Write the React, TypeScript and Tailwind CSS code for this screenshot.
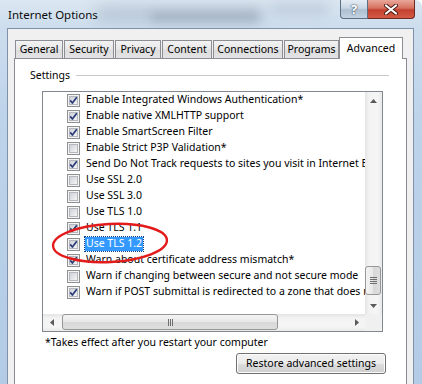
import React from "react";

type Item = { checked: boolean; label: string; selected?: boolean };

const items: Item[] = [
  { checked: true, label: "Enable Integrated Windows Authentication*" },
  { checked: true, label: "Enable native XMLHTTP support" },
  { checked: true, label: "Enable SmartScreen Filter" },
  { checked: false, label: "Enable Strict P3P Validation*" },
  { checked: true, label: "Send Do Not Track requests to sites you visit in Internet Explorer*" },
  { checked: false, label: "Use SSL 2.0" },
  { checked: false, label: "Use SSL 3.0" },
  { checked: false, label: "Use TLS 1.0" },
  { checked: true, label: "Use TLS 1.1" },
  { checked: true, label: "Use TLS 1.2", selected: true },
  { checked: true, label: "Warn about certificate address mismatch*" },
  { checked: false, label: "Warn if changing between secure and not secure mode" },
  { checked: true, label: "Warn if POST submittal is redirected to a zone that does not permit posts" },
];

const tabs = [
  { label: "General", w: "w-[48px]" },
  { label: "Security", w: "w-[50px]" },
  { label: "Privacy", w: "w-[46px]" },
  { label: "Content", w: "w-[50px]" },
  { label: "Connections", w: "w-[70px]" },
  { label: "Programs", w: "w-[55px]" },
];

function CheckBox({ checked }: { checked: boolean }) {
  return (
    <svg width="13" height="13" viewBox="0 0 13 13" className="shrink-0">
      <defs>
        <linearGradient id="cbg" x1="0" y1="0" x2="1" y2="1">
          <stop offset="0" stopColor="#cbcfd5" />
          <stop offset="1" stopColor="#f7f7f7" />
        </linearGradient>
      </defs>
      <rect x="0.5" y="0.5" width="12" height="12" fill="#f4f4f4" stroke="#8e8f8f" />
      <rect x="2.5" y="2.5" width="8" height="8" fill="url(#cbg)" stroke="#b4b8be" />
      {checked && (
        <path d="M3.2 6.4 L5.4 9 L9.8 3.2" fill="none" stroke="#2a3d78" strokeWidth="1.7" strokeLinejoin="round" />
      )}
    </svg>
  );
}

function Arrow({ dir }: { dir: "up" | "down" | "left" | "right" }) {
  const pts = {
    up: "0,4 3.5,0 7,4",
    down: "0,0 3.5,4 7,0",
    left: "4,0 0,3.5 4,7",
    right: "0,0 4,3.5 0,7",
  }[dir];
  const vertical = dir === "up" || dir === "down";
  return (
    <svg width={vertical ? 7 : 4} height={vertical ? 4 : 7} viewBox={vertical ? "0 0 7 4" : "0 0 4 7"}>
      <polygon points={pts} fill="#5a5a5a" />
    </svg>
  );
}

export default function App() {
  return (
    <div className="relative flex h-[384px] w-[422px] flex-col overflow-hidden rounded-tr-[7px] bg-[linear-gradient(to_bottom,#dbe6f1,#cddded_28px,#bdd3ea_120px,#b3cbe6)] font-['Noto_Sans',sans-serif] text-black">
      {/* blurred glass background */}
      <div className="pointer-events-none absolute left-[95px] top-[6px] h-[16px] w-[170px] rounded-full bg-[#7f8fa2] opacity-30 blur-[7px]" />
      <div className="pointer-events-none absolute left-[150px] top-[12px] h-[10px] w-[110px] rounded-full bg-[#6b7b8e] opacity-30 blur-[5px]" />
      <div className="pointer-events-none absolute left-[270px] top-[2px] h-[14px] w-[60px] rounded-full bg-[#a4b4c6] opacity-40 blur-[6px]" />

      {/* title bar */}
      <div className="relative flex h-[28px] shrink-0 items-start justify-between">
        <div className="pl-[8px] pt-[7px] text-[11.5px] leading-[16px] text-[#0b0b0b]">Internet Options</div>
        <div className="mr-[7px] flex">
          <div className="flex h-[19px] w-[28px] items-center justify-center rounded-bl-[4px] border border-t-0 border-[#5d6f85] bg-[linear-gradient(to_bottom,#e4ecf4,#c8d6e4_45%,#aebfd1_55%,#c4d3e2)] text-[13px] font-bold leading-none text-white [text-shadow:0_0_2px_#3b4a5c,0_0_1px_#3b4a5c]">
            ?
          </div>
          <div className="flex h-[19px] w-[47px] items-center justify-center rounded-br-[4px] border border-l-0 border-t-0 border-[#6d2a22] bg-[linear-gradient(to_bottom,#e9a79a,#d6705f_45%,#c4402f_55%,#d45a45)]">
            <svg width="14" height="11" viewBox="0 0 14 11">
              <path d="M2 1.5 L12 9.5 M12 1.5 L2 9.5" stroke="#4a1a14" strokeWidth="4" strokeLinecap="round" />
              <path d="M2 1.5 L12 9.5 M12 1.5 L2 9.5" stroke="#ffffff" strokeWidth="2.2" strokeLinecap="round" />
            </svg>
          </div>
        </div>
      </div>

      {/* dialog body */}
      <div className="relative ml-[7px] mr-[8px] flex flex-1 flex-col border border-b-0 border-[#8092aa] bg-[#f0f0f0]">
        {/* tabs */}
        <div className="flex h-[21px] items-end gap-[1px] pl-[7px] pt-0 mt-[8px] text-[10.5px] leading-none">
          {tabs.map((t) => (
            <div
              key={t.label}
              className={`${t.w} flex h-[18px] items-center justify-center border border-b-0 border-[#8c8e94] bg-[linear-gradient(to_bottom,#f3f3f3,#e6e6e6_50%,#dcdcdc_51%,#e3e3e3)]`}
            >
              {t.label}
            </div>
          ))}
          <div className="relative z-10 -mb-[1px] -ml-[1px] flex h-[22px] w-[64px] items-start justify-center border border-b-0 border-[#8c8e94] bg-white pt-[5px]">
            Advanced
          </div>
        </div>

        {/* tab page */}
        <div className="ml-[6px] mr-[6px] flex flex-1 flex-col border border-b-0 border-[#898c95] bg-white text-[10.5px]">
          <div className="mt-[9px] flex h-[14px] items-center leading-[14px]">
            <span className="ml-[15px]">Settings</span>
            <div className="ml-[6px] mr-[17px] h-px flex-1 bg-[#c9c9c9]" />
          </div>

          <div className="ml-[27px] mt-[9px] grid h-[241px] w-[341px] grid-cols-[1fr_17px] grid-rows-[1fr_17px] border border-[#828790]">
            {/* list content */}
            <div className="overflow-hidden">
              {items.map((it) => (
                <div key={it.label} className="flex h-[16px] items-center whitespace-nowrap pl-[24px] leading-[13px]">
                  <CheckBox checked={it.checked} />
                  <span
                    className={
                      it.selected
                        ? "ml-[5px] bg-[#3399ff] px-[1px] pb-[1px] text-white outline-1 outline-dotted outline-[#0f3f7f]"
                        : "ml-[5px] px-[1px] pb-[1px]"
                    }
                  >
                    {it.label}
                  </span>
                </div>
              ))}
            </div>

            {/* vertical scrollbar */}
            <div className="flex flex-col bg-[linear-gradient(to_right,#e4e4e4,#f3f3f3_25%,#f5f5f5_75%,#e9e9e9)]">
              <div className="flex h-[17px] items-center justify-center">
                <Arrow dir="up" />
              </div>
              <div className="flex flex-1 flex-col">
                <div className="h-[157px]" />
                <div className="mx-[0px] flex h-[29px] w-[16px] flex-col items-center justify-center gap-[1px] rounded-[3px] border border-[#979797] bg-[linear-gradient(to_right,#f4f4f4,#e8e8e8_50%,#d8d8d8_51%,#dedede)]">
                  <div className="h-px w-[7px] bg-[#6e6e6e]" />
                  <div className="h-px w-[7px] bg-[#6e6e6e]" />
                  <div className="h-px w-[7px] bg-[#6e6e6e]" />
                  <div className="h-px w-[7px] bg-[#6e6e6e]" />
                </div>
              </div>
              <div className="flex h-[17px] items-center justify-center">
                <Arrow dir="down" />
              </div>
            </div>

            {/* horizontal scrollbar */}
            <div className="flex bg-[linear-gradient(to_bottom,#e4e4e4,#f3f3f3_25%,#f5f5f5_75%,#e9e9e9)]">
              <div className="flex w-[17px] items-center justify-center">
                <Arrow dir="left" />
              </div>
              <div className="flex flex-1">
                <div className="w-[2px]" />
                <div className="flex h-[16px] w-[216px] items-center justify-center gap-[1px] rounded-[3px] border border-[#979797] bg-[linear-gradient(to_bottom,#f4f4f4,#e8e8e8_50%,#d8d8d8_51%,#dedede)]">
                  <div className="h-[7px] w-px bg-[#6e6e6e]" />
                  <div className="h-[7px] w-px bg-[#6e6e6e]" />
                  <div className="h-[7px] w-px bg-[#6e6e6e]" />
                </div>
              </div>
              <div className="flex w-[17px] items-center justify-center">
                <Arrow dir="right" />
              </div>
            </div>
            <div className="bg-[#f0f0f0]" />
          </div>

          <div className="ml-[30px] mt-[3px] leading-[14px]">*Takes effect after you restart your computer</div>

          <div className="ml-[221px] mt-[4px] flex h-[21px] w-[150px] items-center justify-center rounded-[3px] border border-[#707070] bg-[linear-gradient(to_bottom,#f2f2f2,#ebebeb_50%,#dddddd_51%,#cfcfcf)] shadow-[inset_0_0_0_1px_#fcfcfc]">
            Restore advanced settings
          </div>
        </div>
      </div>

      {/* red annotation ellipse */}
      <svg className="pointer-events-none absolute left-0 top-0" width="422" height="384">
        <ellipse cx="110" cy="243" rx="57" ry="19" fill="none" stroke="#e31b1b" strokeWidth="2.4" transform="rotate(-3 110 243)" />
      </svg>
    </div>
  );
}
